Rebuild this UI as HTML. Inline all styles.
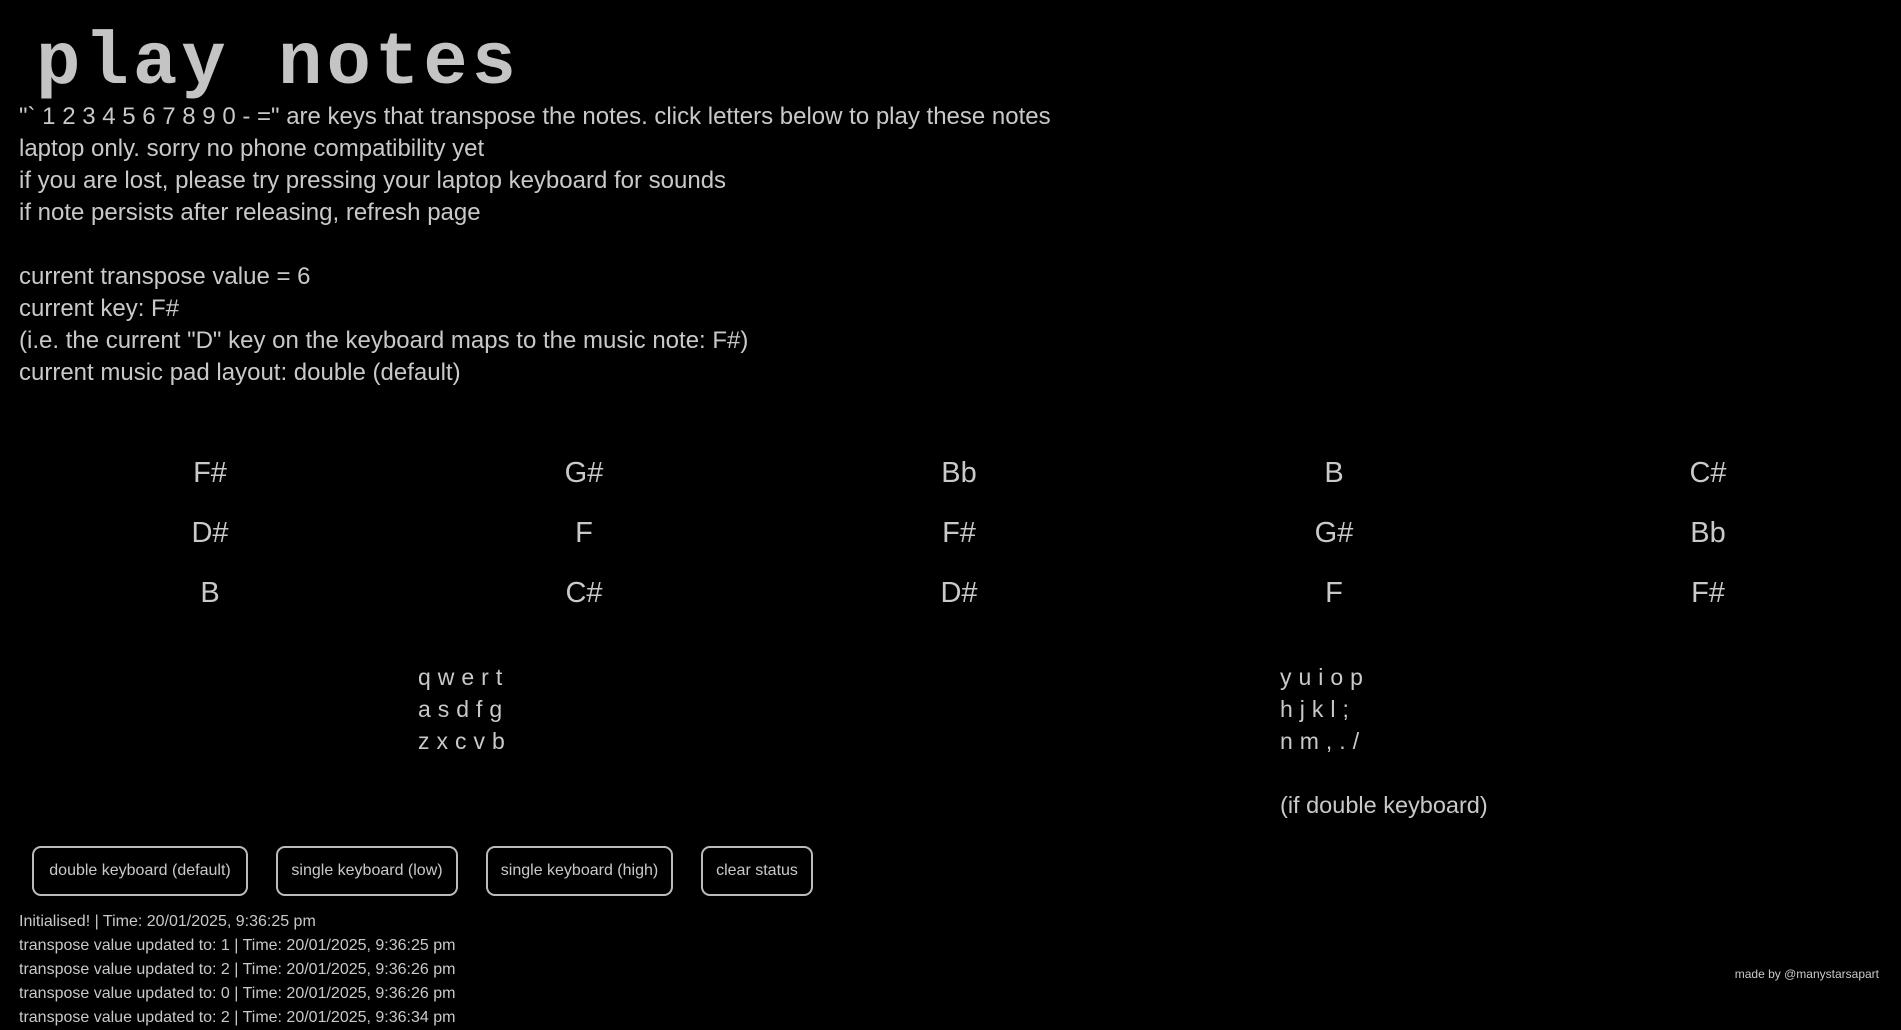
<!DOCTYPE html>
<html><head><style>
body{margin:0;background:#000;color:#c9c9c9;font-family:"Liberation Sans",sans-serif;width:1901px;height:1022px;overflow:hidden;position:relative}
.a{position:absolute;white-space:nowrap}
h1{position:absolute;left:36px;top:22px;margin:0;font-family:"Liberation Mono",monospace;font-weight:bold;font-size:74px;letter-spacing:4px;color:#c4c4c4}
.p{left:19px;font-size:24px;line-height:32px}
.n{font-size:29px;transform:translateX(-50%)}
.k{font-size:23px;line-height:32px;letter-spacing:0.3px}
.b{position:absolute;top:846px;height:50px;border:2px solid #bbb;border-radius:9px;box-sizing:border-box;font-size:16px;display:flex;align-items:center;justify-content:center}
.s{left:19px;top:910px;font-size:16px;line-height:24px}
</style></head><body>
<h1>play notes</h1>
<div class="a p" style="top:101px">"` 1 2 3 4 5 6 7 8 9 0 - =" are keys that transpose the notes. click letters below to play these notes<br>laptop only. sorry no phone compatibility yet<br>if you are lost, please try pressing your laptop keyboard for sounds<br>if note persists after releasing, refresh page<br><br>current transpose value = 6<br>current key: F#<br>(i.e. the current "D" key on the keyboard maps to the music note: F#)<br>current music pad layout: double (default)</div>
<div class="a n" style="left:210px;top:457px">F#</div><div class="a n" style="left:584px;top:457px">G#</div><div class="a n" style="left:959px;top:457px">Bb</div><div class="a n" style="left:1334px;top:457px">B</div><div class="a n" style="left:1708px;top:457px">C#</div>
<div class="a n" style="left:210px;top:517px">D#</div><div class="a n" style="left:584px;top:517px">F</div><div class="a n" style="left:959px;top:517px">F#</div><div class="a n" style="left:1334px;top:517px">G#</div><div class="a n" style="left:1708px;top:517px">Bb</div>
<div class="a n" style="left:210px;top:577px">B</div><div class="a n" style="left:584px;top:577px">C#</div><div class="a n" style="left:959px;top:577px">D#</div><div class="a n" style="left:1334px;top:577px">F</div><div class="a n" style="left:1708px;top:577px">F#</div>
<div class="a k" style="left:418px;top:661px">q w e r t<br>a s d f g<br>z x c v b</div>
<div class="a k" style="left:1280px;top:661px">y u i o p<br>h j k l ;<br>n m , . /<br><br><span style="letter-spacing:0;font-size:23.5px">(if double keyboard)</span></div>
<div class="b" style="left:32px;width:216px">double keyboard (default)</div>
<div class="b" style="left:276px;width:182px">single keyboard (low)</div>
<div class="b" style="left:486px;width:187px">single keyboard (high)</div>
<div class="b" style="left:701px;width:112px">clear status</div>
<div class="a s">Initialised! | Time: 20/01/2025, 9:36:25 pm<br>transpose value updated to: 1 | Time: 20/01/2025, 9:36:25 pm<br>transpose value updated to: 2 | Time: 20/01/2025, 9:36:26 pm<br>transpose value updated to: 0 | Time: 20/01/2025, 9:36:26 pm<br>transpose value updated to: 2 | Time: 20/01/2025, 9:36:34 pm</div>
<div class="a" style="right:22px;top:967px;font-size:12px">made by @manystarsapart</div>
</body></html>
